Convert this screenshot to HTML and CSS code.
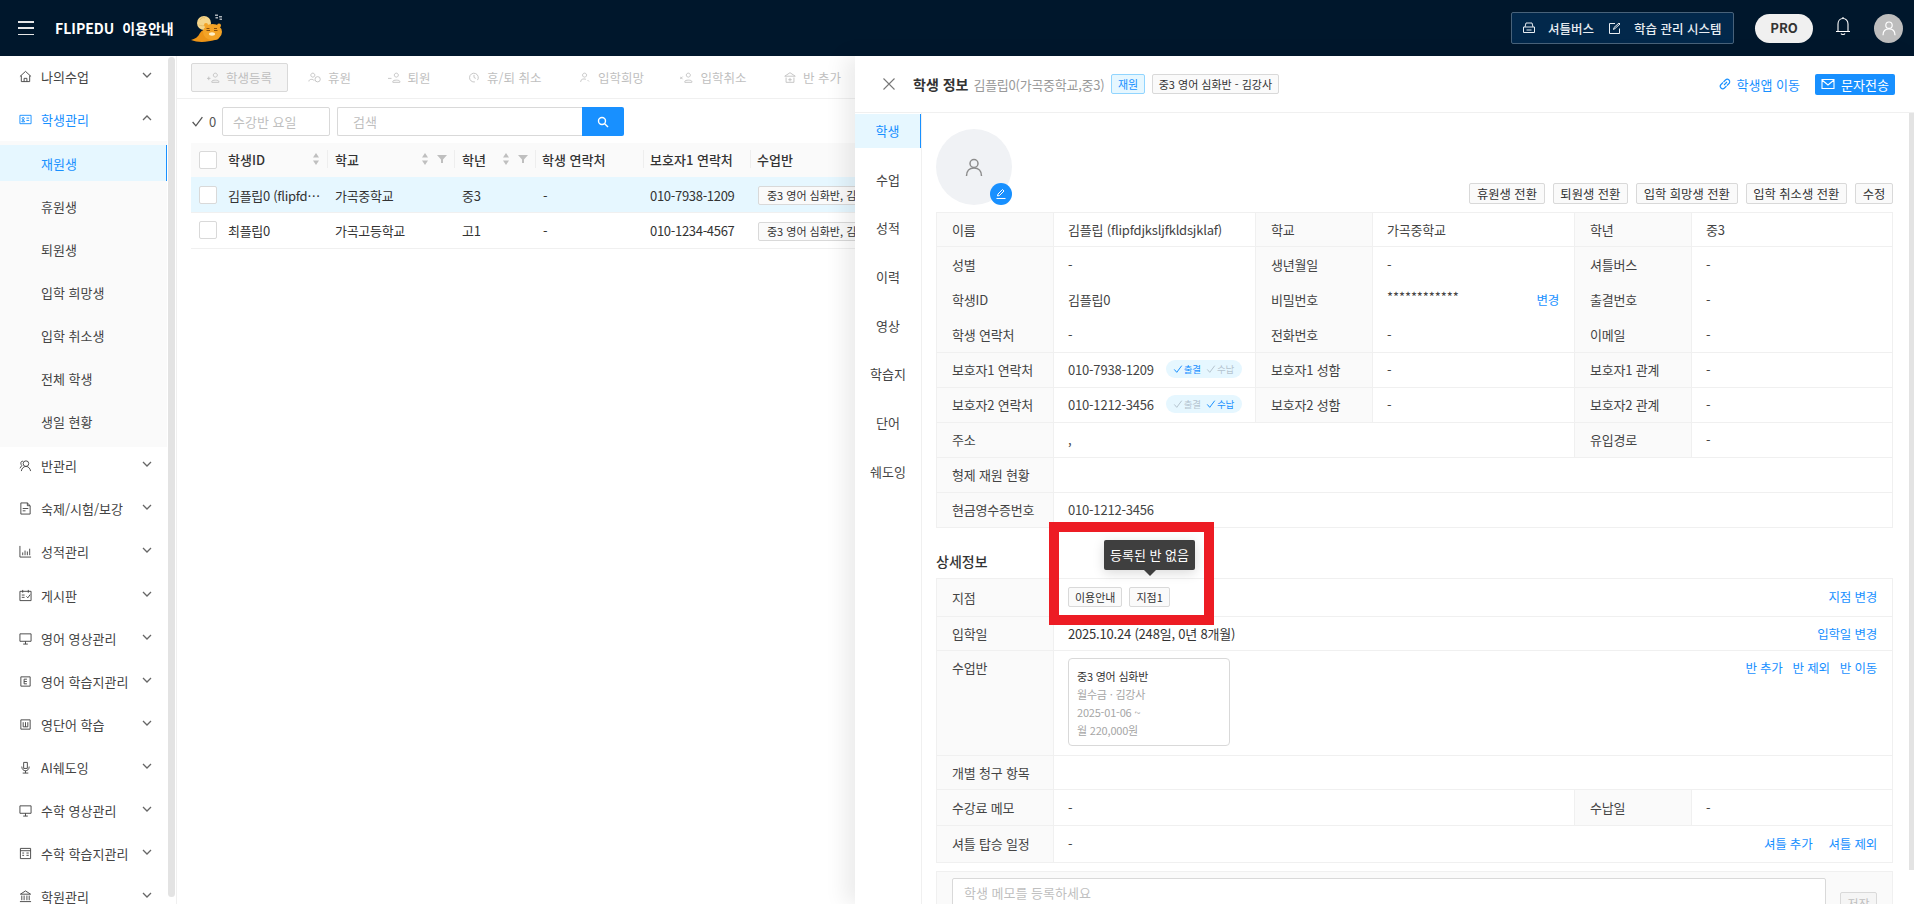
FILE: index.html
```html
<!DOCTYPE html>
<html lang="ko">
<head>
    <meta charset="UTF-8">
    <title>FLIPEDU 학생관리</title>
    <link rel="stylesheet" href="styles.css">
</head>
<body>
    <svg class="sprite" xmlns="http://www.w3.org/2000/svg">
        <symbol id="i-down" viewBox="0 0 10 10"><path d="M1 3l4 4 4-4" fill="none" stroke="currentColor" stroke-width="1.3"/></symbol>
        <symbol id="i-up" viewBox="0 0 10 10"><path d="M1 7l4-4 4 4" fill="none" stroke="currentColor" stroke-width="1.3"/></symbol>
        <symbol id="i-sort" viewBox="0 0 8 14"><path d="M4 1l3 4.500H1zM4 13l3-4.500H1z" fill="currentColor"/></symbol>
        <symbol id="i-filter" viewBox="0 0 10 10"><path d="M0 1h10L6 5.500V9H4V5.500z" fill="currentColor"/></symbol>
        <symbol id="i-person" viewBox="0 0 20 20"><circle cx="10" cy="6.500" r="4" fill="none" stroke="currentColor" stroke-width="1.500"/><path d="M2.500 19c0-5 3-8 7.500-8s7.500 3 7.500 8" fill="none" stroke="currentColor" stroke-width="1.500"/></symbol>
        <symbol id="i-check" viewBox="0 0 12 12"><path d="M1.500 6.500L4.500 10 10.500 2" fill="none" stroke="currentColor" stroke-width="1.200"/></symbol>
    </svg>

    <header class="topbar">
        <div class="topbar-left">
            <span class="burger"><i></i><i></i><i></i></span>
            <span class="brand">FLIPEDU&nbsp; 이용안내</span>
            <svg class="mascot" width="32" height="30" viewBox="0 0 32 30">
                <circle cx="13" cy="10" r="7" fill="#f4d58a"/>
                <path d="M9 7c1-2 3-3 5-2M8 12c2 1 5 1 7 0" fill="none" stroke="#d9b25e" stroke-width=".7"/>
                <path d="M0 27c4-1 7-3 9-7 2-3 5-4 8-4l10 5c2 3 1 6-3 6-7 2-17 3-24 0z" fill="#ec9417"/>
                <ellipse cx="21.500" cy="19" rx="9.500" ry="8" fill="#f3a326"/>
                <circle cx="15" cy="12" r="2" fill="#f3a326"/>
                <circle cx="28" cy="12.500" r="2" fill="#f3a326"/>
                <path d="M15.500 17.500h3.500M23 17.500h3.500M15.500 15.500h3M23 15.500h3" stroke="#6a3a08" stroke-width=".8"/>
                <ellipse cx="21" cy="21" rx="3" ry="1.700" fill="#fff0c8"/>
                <path d="M24 1.500h3v1.500h-3zM24.500 4h2.500v1.500h-2.500zM28 3h3v1.500h-3zM28.500 5.500h2.500v1.500h-2.500z" fill="#a9b0b6"/>
            </svg>
        </div>
        <div class="topbar-right">
            <div class="sys-box">
                <a class="sys-link">
                    <svg width="12" height="12" viewBox="0 0 12 12" fill="none" stroke="currentColor"><path d="M2 5l1-4h6l1 4M.5 5h11v5.500H.5zM3.500 8h5"/></svg>
                    <b>셔틀버스</b>
                </a>
                <a class="sys-link">
                    <svg width="12" height="12" viewBox="0 0 12 12" fill="none" stroke="currentColor"><path d="M10.500 6.500v5H.5V1.500H6M4.500 7.500l.5-2 5-4.500 1 1-5 4.500z"/></svg>
                    <b>학습 관리 시스템</b>
                </a>
            </div>
            <span class="pro-pill">PRO</span>
            <svg class="bell" width="18" height="20" viewBox="0 0 18 20" fill="none" stroke="#fff" stroke-width="1.100"><path d="M4 15V8c0-3 2-5.500 5-5.500S14 5 14 8v7M2 15.500h14M9 1v1.500M7 17.500c.5 1.300 3.500 1.300 4 0"/></svg>
            <span class="user-pic"><svg width="16" height="16"><use href="#i-person"/></svg></span>
        </div>
    </header>

    <div class="layout">
        <aside class="sidebar">
            <nav class="menu">
                <a class="menu-item">
                    <svg class="menu-icon" viewBox="0 0 14 14"><path d="M1 7l6-5.500L13 7M2.500 6v6.500h9V6M5.500 12.500V9h3v3.500"/></svg>
                    <span>나의수업</span><svg class="chev"><use href="#i-down"/></svg>
                </a>
                <a class="menu-item active">
                    <svg class="menu-icon" viewBox="0 0 14 14"><path d="M1 2.500h12v9H1zM3 9.500c0-2 3-2 3 0zM8 5.500h3M8 8h3"/><circle cx="4.500" cy="6" r="1.200"/></svg>
                    <span>학생관리</span><svg class="chev"><use href="#i-up"/></svg>
                </a>
                <div class="submenu">
                    <a class="sub-item current">재원생</a>
                    <a class="sub-item">휴원생</a>
                    <a class="sub-item">퇴원생</a>
                    <a class="sub-item">입학 희망생</a>
                    <a class="sub-item">입학 취소생</a>
                    <a class="sub-item">전체 학생</a>
                    <a class="sub-item">생일 현황</a>
                </div>
                <a class="menu-item">
                    <svg class="menu-icon" viewBox="0 0 14 14"><circle cx="7.500" cy="5" r="3"/><path d="M2.500 13c.5-3 2.500-5 5-5s4.500 2 5 5M4.500 2.500C3 2 2 3 2 4.500c0 1 .5 2 1 2.500L1 10"/></svg>
                    <span>반관리</span><svg class="chev"><use href="#i-down"/></svg>
                </a>
                <a class="menu-item">
                    <svg class="menu-icon" viewBox="0 0 14 14"><path d="M2 1h7l3 3v9H2zM9 1v3h3M4 7h6M4 9.500h3"/></svg>
                    <span>숙제/시험/보강</span><svg class="chev"><use href="#i-down"/></svg>
                </a>
                <a class="menu-item">
                    <svg class="menu-icon" viewBox="0 0 14 14"><path d="M1 1v12h12M4 11V8M6.500 11V6M9 11V7M11.500 11V4"/></svg>
                    <span>성적관리</span><svg class="chev"><use href="#i-down"/></svg>
                </a>
                <a class="menu-item">
                    <svg class="menu-icon" viewBox="0 0 14 14"><path d="M1 2.500h12v10H1zM4 1v3M10 1v3M3 6.500h3M3 9h3M8 8l1.500 1.500L12 6"/></svg>
                    <span>게시판</span><svg class="chev"><use href="#i-down"/></svg>
                </a>
                <a class="menu-item">
                    <svg class="menu-icon" viewBox="0 0 14 14"><path d="M1 2h12v8H1zM7 10v3M4.500 13h5"/></svg>
                    <span>영어 영상관리</span><svg class="chev"><use href="#i-down"/></svg>
                </a>
                <a class="menu-item">
                    <svg class="menu-icon" viewBox="0 0 14 14"><path d="M2 2h10v10H2zM5.500 4.500h3M5.500 7h3M5.500 9.500h3M5.500 4.500v5"/></svg>
                    <span>영어 학습지관리</span><svg class="chev"><use href="#i-down"/></svg>
                </a>
                <a class="menu-item">
                    <svg class="menu-icon" viewBox="0 0 14 14"><path d="M2 2h10v10H2zM4.500 4.500v5h5v-5M7 4.500v5"/></svg>
                    <span>영단어 학습</span><svg class="chev"><use href="#i-down"/></svg>
                </a>
                <a class="menu-item">
                    <svg class="menu-icon" viewBox="0 0 14 14"><path d="M5 1.500h4v6.500H5zM3 6c0 6 8 6 8 0M7 10.500V13M4 13h6"/></svg>
                    <span>AI쉐도잉</span><svg class="chev"><use href="#i-down"/></svg>
                </a>
                <a class="menu-item">
                    <svg class="menu-icon" viewBox="0 0 14 14"><path d="M1 2h12v8H1zM7 10v3M4.500 13h5"/></svg>
                    <span>수학 영상관리</span><svg class="chev"><use href="#i-down"/></svg>
                </a>
                <a class="menu-item">
                    <svg class="menu-icon" viewBox="0 0 14 14"><path d="M1.500 1.500h11v11h-11zM1.500 4h11M3.500 6.500h2M3.500 9h2M8 6.500h2.500M8 9h2.500"/></svg>
                    <span>수학 학습지관리</span><svg class="chev"><use href="#i-down"/></svg>
                </a>
                <a class="menu-item">
                    <svg class="menu-icon" viewBox="0 0 14 14"><path d="M7 1L1.500 4.500h11zM3 6v5M5.500 6v5M8.500 6v5M11 6v5M1 12.500h12"/></svg>
                    <span>학원관리</span><svg class="chev"><use href="#i-down"/></svg>
                </a>
            </nav>
            <div class="side-scroll"></div>
        </aside>

        <main class="content">
            <div class="toolbar">
                <button class="tool-btn primary"><svg class="tool-icon" viewBox="0 0 16 12"><path d="M0 7h4M2 5v4M9.500 1a2.300 2.300 0 1 0 .01 0M5.500 11.500h8v-1c0-2-8-2-8 0z"/></svg>학생등록</button>
                <button class="tool-btn"><svg class="tool-icon" viewBox="0 0 16 12"><path d="M5.500 1a2.300 2.300 0 1 0 .01 0M1 10.500c0-3 5-3 6-1"/><circle cx="11" cy="8" r="3"/></svg>휴원</button>
                <button class="tool-btn spaced"><svg class="tool-icon" viewBox="0 0 16 12"><path d="M0 7h4M9.500 1a2.300 2.300 0 1 0 .01 0M5.500 11.500h8v-1c0-2-8-2-8 0z"/></svg>퇴원</button>
                <button class="tool-btn spaced"><svg class="tool-icon" viewBox="0 0 16 12"><path d="M12 9a5 5 0 1 0-3 2M8 3v3l2 1"/></svg>휴/퇴 취소</button>
                <button class="tool-btn spaced"><svg class="tool-icon" viewBox="0 0 16 12"><path d="M7.500 1a2.300 2.300 0 1 0 .01 0M3 11c0-3 3-4 6-3M11 9l1.500 1.500"/></svg>입학희망</button>
                <button class="tool-btn spaced"><svg class="tool-icon" viewBox="0 0 16 12"><path d="M0 5l3 3M3 5L0 8M9.500 1a2.300 2.300 0 1 0 .01 0M5.500 11.500h8v-1c0-2-8-2-8 0z"/></svg>입학취소</button>
                <button class="tool-btn spaced"><svg class="tool-icon" viewBox="0 0 16 12"><path d="M8 .5L2 4.500h12zM3.500 6v5.500h9V6M8 6.500v4M6 8.500h4"/></svg>반 추가</button>
            </div>

            <div class="filters">
                <span class="count"><svg width="13" height="13"><use href="#i-check"/></svg>0</span>
                <div class="fake-input day">수강반 요일</div>
                <div class="search">
                    <div class="fake-input">검색</div>
                    <button class="search-btn">
                        <svg width="14" height="14" viewBox="0 0 14 14" fill="none" stroke="#fff" stroke-width="1.400"><circle cx="6" cy="6" r="3.500"/><path d="M8.700 8.700L12 12"/></svg>
                    </button>
                </div>
            </div>

            <table class="grid">
                <colgroup>
                    <col class="c-check"><col class="c-id"><col class="c-school"><col class="c-grade"><col class="c-phone"><col class="c-parent"><col class="c-class">
                </colgroup>
                <thead>
                    <tr>
                        <th class="check"><span class="box"></span></th>
                        <th><div class="th-in">학생ID<svg class="sort"><use href="#i-sort"/></svg></div></th>
                        <th><div class="th-in">학교<svg class="sort with-filter"><use href="#i-sort"/></svg><svg class="filter"><use href="#i-filter"/></svg></div></th>
                        <th><div class="th-in">학년<svg class="sort with-filter"><use href="#i-sort"/></svg><svg class="filter"><use href="#i-filter"/></svg></div></th>
                        <th><div class="th-in">학생 연락처</div></th>
                        <th><div class="th-in">보호자1 연락처</div></th>
                        <th><div class="th-in">수업반</div></th>
                    </tr>
                </thead>
                <tbody>
                    <tr class="selected">
                        <td class="check"><span class="box"></span></td>
                        <td>김플립0 (flipfd…</td>
                        <td>가곡중학교</td>
                        <td>중3</td>
                        <td>-</td>
                        <td>010-7938-1209</td>
                        <td><span class="class-tag">중3 영어 심화반, 김강사</span></td>
                    </tr>
                    <tr>
                        <td class="check"><span class="box"></span></td>
                        <td>최플립0</td>
                        <td>가곡고등학교</td>
                        <td>고1</td>
                        <td>-</td>
                        <td>010-1234-4567</td>
                        <td><span class="class-tag">중3 영어 심화반, 김강사</span></td>
                    </tr>
                </tbody>
            </table>
        </main>

        <section class="drawer">
            <div class="drawer-head">
                <svg class="close" width="14" height="14" viewBox="0 0 14 14" fill="none" stroke="#777" stroke-width="1.100"><path d="M1.500 1.500l11 11M12.500 1.500l-11 11"/></svg>
                <h2>학생 정보</h2>
                <span class="head-sub">김플립0(가곡중학교,중3)</span>
                <span class="tag tag-blue">재원</span>
                <span class="tag">중3 영어 심화반 - 김강사</span>
                <a class="app-link">
                    <svg width="14" height="14" viewBox="0 0 14 14" fill="none" stroke="#1890ff" stroke-width="1.100"><path d="M6 8l3-3M5 5.500L3 7.500a2.400 2.400 0 0 0 3.500 3.500l2-2M9 8.500l2-2A2.400 2.400 0 0 0 7.500 3l-2 2"/></svg>
                    학생앱 이동
                </a>
                <button class="sms-btn">
                    <svg width="14" height="12" viewBox="0 0 14 12" fill="none" stroke="#fff" stroke-width="1.100"><path d="M1 1.500h12v9H1zM1 2l6 5 6-5"/></svg>
                    문자전송
                </button>
            </div>
            <div class="drawer-body">
                <ul class="tabs">
                    <li class="on">학생</li>
                    <li>수업</li>
                    <li>성적</li>
                    <li>이력</li>
                    <li>영상</li>
                    <li>학습지</li>
                    <li>단어</li>
                    <li>쉐도잉</li>
                </ul>
                <div class="detail">
                    <div class="profile">
                        <div class="photo">
                            <svg width="20" height="20"><use href="#i-person"/></svg>
                            <span class="photo-edit">
                                <svg width="12" height="12" viewBox="0 0 12 12" fill="none" stroke="#fff"><path d="M2.500 8l.5-2 4.500-4.500 1.500 1.500L4.500 7.500zM1.500 10.500h9"/></svg>
                            </span>
                        </div>
                        <div class="actions">
                            <button class="mini-btn">휴원생 전환</button>
                            <button class="mini-btn">퇴원생 전환</button>
                            <button class="mini-btn">입학 희망생 전환</button>
                            <button class="mini-btn">입학 취소생 전환</button>
                            <button class="mini-btn">수정</button>
                        </div>
                    </div>

                    <table class="info">
                        <colgroup><col class="c-l"><col class="c-v"><col class="c-l"><col class="c-v"><col class="c-l"><col></colgroup>
                        <tr class="row-first">
                            <th>이름</th><td>김플립 (flipfdjksljfkldsjklaf)</td>
                            <th>학교</th><td>가곡중학교</td>
                            <th>학년</th><td>중3</td>
                        </tr>
                        <tr class="no-line">
                            <th>성별</th><td>-</td>
                            <th>생년월일</th><td>-</td>
                            <th>셔틀버스</th><td>-</td>
                        </tr>
                        <tr class="no-line">
                            <th>학생ID</th><td>김플립0</td>
                            <th>비밀번호</th><td><div class="split"><span class="stars">************</span><a class="link">변경</a></div></td>
                            <th>출결번호</th><td>-</td>
                        </tr>
                        <tr class="row-contact">
                            <th>학생 연락처</th><td>-</td>
                            <th>전화번호</th><td>-</td>
                            <th>이메일</th><td>-</td>
                        </tr>
                        <tr>
                            <th>보호자1 연락처</th>
                            <td>010-7938-1209<span class="sms-flags"><i class="on"><svg width="10" height="10"><use href="#i-check"/></svg>출결</i><i><svg width="10" height="10"><use href="#i-check"/></svg>수납</i></span></td>
                            <th>보호자1 성함</th><td>-</td>
                            <th>보호자1 관계</th><td>-</td>
                        </tr>
                        <tr>
                            <th>보호자2 연락처</th>
                            <td>010-1212-3456<span class="sms-flags"><i><svg width="10" height="10"><use href="#i-check"/></svg>출결</i><i class="on"><svg width="10" height="10"><use href="#i-check"/></svg>수납</i></span></td>
                            <th>보호자2 성함</th><td>-</td>
                            <th>보호자2 관계</th><td>-</td>
                        </tr>
                        <tr>
                            <th>주소</th><td colspan="3">,</td>
                            <th>유입경로</th><td>-</td>
                        </tr>
                        <tr>
                            <th>형제 재원 현황</th><td colspan="5"></td>
                        </tr>
                        <tr>
                            <th>현금영수증번호</th><td colspan="5">010-1212-3456</td>
                        </tr>
                    </table>

                    <h3 class="section-title">상세정보</h3>

                    <table class="info">
                        <colgroup><col class="c-l"><col class="c-v"><col class="c-l"><col class="c-v"><col class="c-l"><col></colgroup>
                        <tr class="row-branch">
                            <th>지점</th>
                            <td colspan="5"><div class="split"><span><span class="tag">이용안내</span><span class="tag">지점1</span></span><a class="link">지점 변경</a></div></td>
                        </tr>
                        <tr class="row-short">
                            <th>입학일</th>
                            <td colspan="5"><div class="split"><span class="dark">2025.10.24 (248일, 0년 8개월)</span><a class="link">입학일 변경</a></div></td>
                        </tr>
                        <tr class="row-class">
                            <th>수업반</th>
                            <td colspan="5">
                                <div class="split">
                                    <div class="class-card">
                                        <strong>중3 영어 심화반</strong>
                                        <p>월수금 · 김강사</p>
                                        <p>2025-01-06 ~</p>
                                        <p>월 220,000원</p>
                                    </div>
                                    <span class="links"><a class="link">반 추가</a><a class="link">반 제외</a><a class="link">반 이동</a></span>
                                </div>
                            </td>
                        </tr>
                        <tr class="row-short">
                            <th>개별 청구 항목</th><td colspan="5"></td>
                        </tr>
                        <tr class="row-memo">
                            <th>수강료 메모</th><td colspan="3">-</td>
                            <th>수납일</th><td>-</td>
                        </tr>
                        <tr class="row-shuttle">
                            <th>셔틀 탑승 일정</th>
                            <td colspan="5"><div class="split"><span>-</span><span class="links wide"><a class="link">셔틀 추가</a><a class="link">셔틀 제외</a></span></div></td>
                        </tr>
                    </table>

                    <div class="memo">
                        <div class="memo-input">학생 메모를 등록하세요</div>
                        <button class="memo-save">저장</button>
                    </div>
                </div>
            </div>
            <div class="drawer-scroll"></div>

            <!-- 안내용 표시 -->
            <div class="callout"></div>
            <div class="tooltip">등록된 반 없음</div>
        </section>
    </div>
</body>
</html>
```

FILE: styles.css
```css
* {
    box-sizing: border-box;
}

html, body {
    margin: 0;
    height: 100%;
    overflow: hidden;
}

body {
    display: flex;
    flex-direction: column;
    font-family: "Noto Sans CJK KR", "Noto Sans", sans-serif;
    font-size: 13px;
    color: #333;
    background: #fff;
}

a {
    text-decoration: none;
    color: inherit;
}

button {
    font-family: inherit;
    cursor: pointer;
}

.sprite {
    display: none;
}

/* top bar */
.topbar {
    flex: 0 0 56px;
    display: flex;
    align-items: center;
    justify-content: space-between;
    background: #00172c;
    color: #fff;
    padding: 0 11px 0 18px;
}

.topbar-left,
.topbar-right {
    display: flex;
    align-items: center;
}

.burger {
    display: flex;
    flex-direction: column;
    justify-content: space-between;
    width: 16px;
    height: 14px;
    margin-right: 21px;
}

.burger i {
    height: 1.5px;
    background: #e6e6e6;
}

.brand {
    font-size: 14px;
    font-weight: 700;
    margin-right: 17px;
}

.sys-box {
    display: flex;
    align-items: center;
    gap: 15px;
    width: 223px;
    height: 32px;
    padding: 0 11px;
    margin-right: 21px;
    background: #02284b;
    border: 1px solid #48627a;
    border-radius: 2px;
}

.sys-link {
    display: flex;
    align-items: center;
    gap: 13px;
    white-space: nowrap;
    color: #e8edf2;
    font-size: 12.500px;
}

.sys-link b {
    font-weight: 500;
}

.pro-pill {
    width: 58px;
    height: 29px;
    line-height: 28px;
    text-align: center;
    border-radius: 15px;
    background: #f0f0f0;
    color: #333;
    font-weight: 700;
    margin-right: 21px;
}

.bell {
    margin-right: 22px;
    margin-top: -4px;
}

.user-pic {
    width: 29px;
    height: 29px;
    border-radius: 50%;
    background: #bdbdbd;
    color: #fff;
    display: flex;
    align-items: center;
    justify-content: center;
}

/* layout */
.layout {
    position: relative;
    flex: 1;
    display: flex;
    min-height: 0;
}

/* side menu */
.sidebar {
    position: relative;
    flex: 0 0 177px;
    border-right: 1px solid #f0f0f0;
    overflow: hidden;
}

.menu {
    width: 167px;
    margin-top: -1px;
}

.menu-item {
    display: flex;
    align-items: center;
    height: 43.100px;
    padding-left: 19px;
    color: #444;
}

.menu-item span {
    flex: 1;
    margin-left: 9px;
}

.menu-icon {
    width: 13px;
    height: 13px;
    fill: none;
    stroke: #444;
    stroke-width: 1;
}

.chev {
    width: 10px;
    height: 10px;
    margin-right: 15px;
    margin-top: -3px;
    color: #666;
}

.menu-item.active {
    color: #1890ff;
}

.menu-item.active .menu-icon {
    stroke: #1890ff;
}

.submenu {
    background: #fafafa;
    padding: 4px 0 3px;
    margin-bottom: -3px;
}

.sub-item {
    display: flex;
    align-items: center;
    height: 36px;
    margin-bottom: 7.100px;
    padding-left: 41px;
    color: #444;
}

.sub-item:last-child {
    margin-bottom: 4.500px;
}

.sub-item.current {
    background: #e6f7ff;
    color: #1890ff;
    border-right: 1px solid #1890ff;
}

.side-scroll {
    position: absolute;
    top: 1px;
    bottom: 7px;
    left: 168px;
    width: 7px;
    border-radius: 4px;
    background: #e3e3e3;
}

/* list area */
.content {
    flex: 1;
    min-width: 0;
    overflow: hidden;
}

.toolbar {
    display: flex;
    align-items: center;
    height: 43px;
    padding-left: 14px;
    border-bottom: 1px solid #f0f0f0;
}

.tool-btn {
    display: flex;
    align-items: center;
    gap: 6px;
    height: 29px;
    padding: 0 0 0 20px;
    border: 0;
    background: none;
    color: #bfbfbf;
    font-size: 12.500px;
    white-space: nowrap;
}

.tool-icon {
    width: 14px;
    height: 11px;
    fill: none;
    stroke: #bfbfbf;
    stroke-width: 1;
}

.tool-btn.primary {
    width: 97px;
    gap: 5px;
    padding: 0 0 0 15px;
    background: #f5f5f5;
    border: 1px solid #d9d9d9;
    border-radius: 2px;
}

.tool-btn.spaced {
    padding-left: 36.500px;
}

.filters {
    display: flex;
    align-items: center;
    height: 29px;
    margin: 8px 0 7px 14px;
}

.count {
    display: flex;
    align-items: center;
    gap: 5px;
    width: 31px;
    color: #555;
}

.fake-input {
    height: 29px;
    line-height: 27px;
    padding: 0 10px;
    border: 1px solid #d9d9d9;
    border-radius: 2px;
    color: #bfbfbf;
    background: #fff;
}

.fake-input.day {
    width: 108px;
    margin-right: 7px;
}

.search {
    display: flex;
    width: 287px;
}

.search .fake-input {
    flex: 1;
    padding-left: 15px;
    border-right: 0;
    border-radius: 2px 0 0 2px;
}

.search-btn {
    width: 42px;
    height: 29px;
    border: 0;
    padding: 3px 0 0;
    background: #1890ff;
    border-radius: 0 2px 2px 0;
}

.grid {
    table-layout: fixed;
    border-collapse: collapse;
    width: 680px;
    margin-left: 14px;
}

.c-check { width: 37px; }
.c-id { width: 99px; }
.c-school { width: 127px; }
.c-grade { width: 81px; }
.c-phone { width: 108px; }
.c-parent { width: 107px; }
.c-class { width: 121px; }

.grid th {
    height: 34px;
    padding: 0;
    background: #fafafa;
    font-weight: 500;
    text-align: left;
    color: #333;
}

.th-in {
    display: flex;
    align-items: center;
    height: 18px;
    padding: 0 7px 0 6px;
    margin-top: -2px;
    border-left: 1px solid #eee;
    white-space: nowrap;
}

.grid th:nth-child(2) .th-in {
    border-left: 0;
    padding-left: 0;
}

.grid th:nth-child(n+3):nth-child(-n+4) .th-in {
    padding-left: 7px;
}

.sort {
    width: 8px;
    height: 14px;
    margin-left: auto;
    color: #bfbfbf;
}

.sort.with-filter {
    margin-right: 8px;
}

.filter {
    width: 10px;
    height: 10px;
    color: #bfbfbf;
}

.grid td {
    height: 35.500px;
    padding: 1px 8px 0;
    border-bottom: 1px solid #f0f0f0;
    white-space: nowrap;
    overflow: hidden;
    letter-spacing: -0.300px;
}

.grid td:nth-child(2) {
    padding-left: 0;
}

.grid td:nth-child(6) {
    padding-left: 7px;
}

.grid .selected td {
    background: #e6f7ff;
}

.grid .check {
    padding: 0 0 0 8px;
}

.box {
    display: block;
    width: 18px;
    height: 18px;
    border: 1px solid #d9d9d9;
    border-radius: 2px;
    background: #fff;
}

.class-tag {
    display: inline-block;
    height: 19px;
    line-height: 17px;
    padding: 0 8px;
    border: 1px solid #d9d9d9;
    border-radius: 2px;
    background: #fafafa;
    font-size: 11px;
    letter-spacing: 0;
}

/* student drawer */
.drawer {
    position: absolute;
    top: 0;
    bottom: 0;
    left: 855px;
    right: 0;
    display: flex;
    flex-direction: column;
    background: #fff;
    box-shadow: -10px 0 20px rgba(0, 0, 0, 0.08);
}

.drawer-head {
    flex: 0 0 57px;
    display: flex;
    align-items: center;
    padding: 0 19px 0 27px;
    border-bottom: 1px solid #f0f0f0;
}

.close {
    margin-right: 17px;
}

.drawer-head h2 {
    margin: 0 5px 0 0;
    font-size: 14px;
    font-weight: 700;
    color: #333;
}

.head-sub {
    color: #999;
    margin-right: 7px;
    letter-spacing: -0.250px;
}

.tag {
    display: inline-block;
    height: 20px;
    line-height: 18px;
    padding: 0 6px;
    margin-right: 7px;
    border: 1px solid #d9d9d9;
    border-radius: 2px;
    background: #fafafa;
    font-size: 11px;
    letter-spacing: 0;
    color: #333;
}

.tag-blue {
    padding: 0 5.500px;
    background: #e6f7ff;
    border-color: #91d5ff;
    color: #1890ff;
}

.app-link {
    display: flex;
    align-items: center;
    gap: 5px;
    margin-left: auto;
    margin-right: 15px;
    color: #1890ff;
}

.sms-btn {
    display: flex;
    align-items: center;
    justify-content: center;
    gap: 6px;
    width: 80px;
    height: 21px;
    border: 0;
    border-radius: 2px;
    background: #1890ff;
    color: #fff;
    font-size: 13px;
}

.drawer-body {
    flex: 1;
    display: flex;
    min-height: 0;
}

.tabs {
    flex: 0 0 67px;
    list-style: none;
    margin: 0;
    padding: 1px 0 0;
    border-right: 1px solid #f0f0f0;
}

.tabs li {
    height: 34px;
    line-height: 34px;
    margin-bottom: 14.700px;
    text-align: center;
    color: #444;
}

.tabs li.on {
    background: #e6f7ff;
    color: #1890ff;
    border-right: 1px solid #1890ff;
}

.detail {
    flex: 1;
    padding: 16px 21px 0 14px;
    overflow: hidden;
}

.profile {
    display: flex;
    justify-content: space-between;
    align-items: flex-end;
    height: 82px;
    margin-bottom: 1px;
    padding-bottom: 7px;
}

.photo {
    position: relative;
    align-self: flex-start;
    width: 76px;
    height: 76px;
    border-radius: 50%;
    background: #f0f2f5;
    color: #8c8c8c;
    display: flex;
    align-items: center;
    justify-content: center;
}

.photo-edit {
    position: absolute;
    right: 0;
    bottom: 0;
    width: 22px;
    height: 22px;
    border-radius: 50%;
    background: #1890ff;
    display: flex;
    align-items: center;
    justify-content: center;
}

.actions {
    display: flex;
    gap: 8px;
}

.mini-btn {
    height: 21px;
    padding: 0 6.700px;
    border: 1px solid #d9d9d9;
    border-radius: 2px;
    background: #fafafa;
    color: #333;
    font-size: 12.300px;
    line-height: 18px;
    white-space: nowrap;
}

.info {
    table-layout: fixed;
    border-collapse: collapse;
    width: 957px;
    border: 1px solid #f0f0f0;
}

.c-l { width: 117px; }
.c-v { width: 202px; }

.info th,
.info td {
    height: 35px;
    padding: 0 15px 0 14px;
    border: 1px solid #f0f0f0;
    font-weight: 400;
    text-align: left;
    white-space: nowrap;
    letter-spacing: -0.200px;
}

.info th {
    padding-left: 15px;
    background: #fafafa;
    color: #444;
}

.info td {
    color: #444;
}

.info tr.row-first th,
.info tr.row-first td {
    height: 34px;
}

.info tr.no-line th,
.info tr.no-line td {
    height: 35.300px;
    border-bottom: 0;
}

.info tr.no-line + tr th,
.info tr.no-line + tr td {
    border-top: 0;
}

.info tr.row-contact th,
.info tr.row-contact td {
    height: 35.400px;
}

.split {
    display: flex;
    justify-content: space-between;
}

.stars {
    letter-spacing: -0.100px;
    line-height: 14px;
}

.link {
    color: #1890ff;
    font-size: 12.500px;
}

.dark {
    color: #333;
}

.links {
    display: flex;
    gap: 10px;
}

.links.wide {
    gap: 16px;
}

.sms-flags {
    display: inline-flex;
    align-items: center;
    gap: 5px;
    height: 18px;
    margin-left: 12px;
    padding: 0 8px 0 7px;
    border-radius: 9px;
    background: #e6f7ff;
    vertical-align: 1px;
}

.sms-flags i {
    display: flex;
    align-items: center;
    gap: 1px;
    font-style: normal;
    font-size: 9.500px;
    color: #b5c4cf;
}

.sms-flags i.on {
    color: #1890ff;
}

.section-title {
    margin: 0;
    height: 50px;
    padding-top: 22px;
    font-size: 14px;
    line-height: 22px;
    font-weight: 500;
    color: #333;
}

.info tr.row-branch th,
.info tr.row-branch td {
    height: 38px;
}

.info tr.row-short th,
.info tr.row-short td {
    height: 34px;
}

.info tr.row-class th,
.info tr.row-class td {
    height: 105px;
    vertical-align: top;
    padding-top: 7px;
}

.row-class td {
    padding-bottom: 7px;
}

.info tr.row-memo th,
.info tr.row-memo td {
    height: 36px;
}

.info tr.row-shuttle th,
.info tr.row-shuttle td {
    height: 37px;
}

.class-card {
    width: 162px;
    height: 88px;
    padding: 8px;
    border: 1px solid #d9d9d9;
    border-radius: 4px;
    font-size: 11px;
    line-height: 18px;
}

.class-card strong {
    font-weight: 400;
    color: #333;
}

.class-card p {
    margin: 0;
    color: #a6a6a6;
}

.memo {
    display: flex;
    align-items: flex-start;
    gap: 14px;
    height: 60px;
    margin-top: 8px;
    padding: 6px 15px;
    background: #fafafa;
    border: 1px solid #f0f0f0;
}

.memo-input {
    flex: 0 0 874px;
    height: 50px;
    padding: 4px 11px;
    background: #fff;
    border: 1px solid #d9d9d9;
    border-radius: 2px;
    color: #bfbfbf;
}

.memo-save {
    width: 37px;
    height: 24px;
    margin-top: 14px;
    padding: 0;
    border: 1px solid #d9d9d9;
    border-radius: 2px;
    background: #f5f5f5;
    color: #bfbfbf;
    font-size: 12px;
}

.drawer-scroll {
    position: absolute;
    top: 57px;
    right: 0;
    width: 5px;
    height: 757px;
    background: #e3e3e3;
}

/* overlay on the branch row */
.callout {
    position: absolute;
    left: 194px;
    top: 466px;
    width: 165px;
    height: 103px;
    border: 10px solid #ed1c24;
}

.tooltip {
    position: absolute;
    left: 249px;
    top: 484px;
    width: 91px;
    height: 30px;
    line-height: 30px;
    text-align: center;
    background: #3f3f3f;
    color: #fff;
    border-radius: 2px;
    box-shadow: 0 3px 12px rgba(0, 0, 0, 0.15);
}

.tooltip::after {
    content: "";
    position: absolute;
    left: 40px;
    top: 30px;
    border: 6px solid transparent;
    border-top-color: #3f3f3f;
    border-bottom: 0;
}
```
